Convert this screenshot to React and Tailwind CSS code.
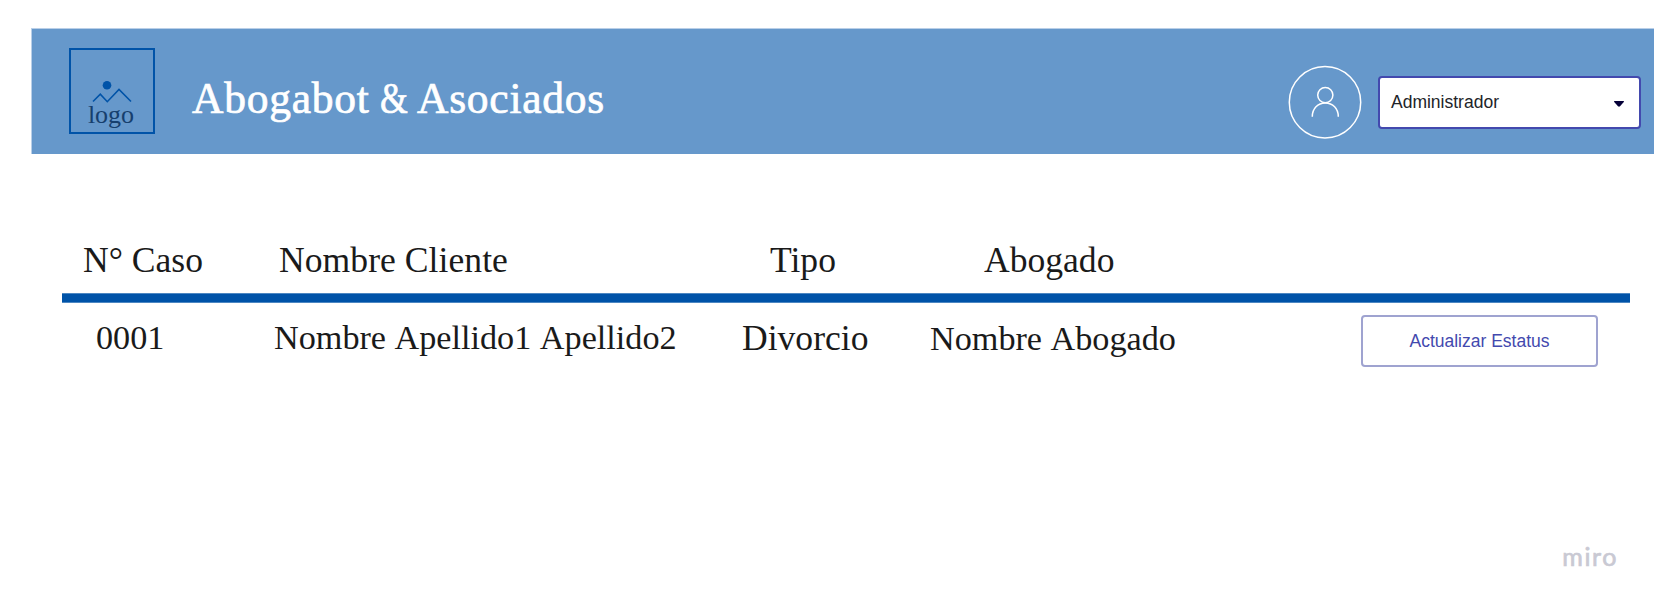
function Logo() {
  return (
    <div className="flex h-[86px] w-[86px] flex-col items-center border-2 border-[#0053a8] pt-[30px]">
      <svg className="block shrink-0" width="40" height="24" viewBox="0 0 40 24" fill="none">
        <circle cx="15" cy="5.3" r="4.3" fill="#0053a8" />
        <path d="M1 21.5 8.3 14.2 15.3 21.7 27 9.5 39 21.5" stroke="#0053a8" strokeWidth="1.6" />
      </svg>
      <span className="-mt-[3px] -ml-[2px] font-['Liberation_Serif',serif] text-[26px] leading-[28px] text-[#163f6e]">
        logo
      </span>
    </div>
  );
}

function Avatar() {
  return (
    <svg className="block shrink-0" width="74" height="74" viewBox="0 0 74 74" fill="none" stroke="#fff" strokeWidth="1.5">
      <circle cx="37" cy="37.3" r="35.7" />
      <circle cx="37.3" cy="30.1" r="7.6" />
      <path d="M24.3 51.7C24.3 43.5 29.8 38.1 37.3 38.1S50.3 43.5 50.3 51.7" />
    </svg>
  );
}

function RoleSelect() {
  return (
    <button className="flex h-[53px] w-[263px] items-center justify-between rounded-[4px] border-2 border-[#4349ae] bg-white pr-[14px] pl-[11px] font-['Liberation_Sans',sans-serif] text-[17.5px] text-[#222428]">
      <span className="-mt-px">Administrador</span>
      <svg className="mt-[2px] block" width="12" height="8" viewBox="0 0 12 8">
        <path d="M1.5 1H10.5Q11.3 1.2 10.8 2L7 6.3Q6 7.2 5 6.3L1.2 2Q.7 1.2 1.5 1Z" fill="#050038" />
      </svg>
    </button>
  );
}

export default function App() {
  return (
    <div className="flex h-[604px] w-[1654px] flex-col overflow-hidden bg-white font-['Liberation_Serif',serif] text-[#1a1a1a]">
      <header className="mt-[28px] ml-[31px] flex h-[126px] shrink-0 border-t border-l border-[#b9cfe8] bg-[#6698cb] pr-[13px]">
        <div className="mt-[19px] ml-[37px]">
          <Logo />
        </div>
        <h1 className="mt-[45px] ml-[37px] text-[43.5px] leading-[49px] tracking-[0.75px] whitespace-nowrap text-white [-webkit-text-stroke:0.7px_white] [word-spacing:-1px]">
          Abogabot <span className="-mx-[3px] inline-block scale-x-[0.82]">&amp;</span> Asociados
        </h1>
        <div className="ml-auto flex pt-[36px]">
          <Avatar />
          <div className="mt-[11px] ml-[16px]">
            <RoleSelect />
          </div>
        </div>
      </header>

      <main className="mt-[86px] ml-[62px] w-[1568px]">
        <div className="grid h-[53px] grid-cols-[217px_491px_214px_646px] text-[35.6px] leading-[40px] whitespace-nowrap">
          <span className="pl-[21px]">N° Caso</span>
          <span className="tracking-[0.05px]">Nombre Cliente</span>
          <span>Tipo</span>
          <span>Abogado</span>
        </div>
        <div className="h-[10px] border-y border-[#4d87c2] bg-[#0053a8]" />
        <div className="grid h-[64px] grid-cols-[212px_468px_188px_431px_237px] text-[34.2px] leading-[40px] whitespace-nowrap [font-kerning:none]">
          <span className="pt-[15px] pl-[34px]">0001</span>
          <span className="pt-[15px]">Nombre Apellido1 Apellido2</span>
          <span className="pt-[15px] text-[35.6px]">Divorcio</span>
          <span className="pt-[16px]">Nombre Abogado</span>
          <button className="mt-[12px] h-[52px] rounded-[4px] border-2 border-[#9fa3d0] bg-white pb-px font-['Liberation_Sans',sans-serif] text-[17.5px] leading-5 text-[#4349ae]">
            Actualizar Estatus
          </button>
        </div>
      </main>

      <footer className="mt-auto mr-[36px] mb-[33px] self-end font-['Lato',sans-serif] text-[25px] leading-[30px] font-normal tracking-[1.6px] text-[#c9c9d3] [-webkit-text-stroke:0.7px_#c9c9d3]">
        miro
      </footer>
    </div>
  );
}
